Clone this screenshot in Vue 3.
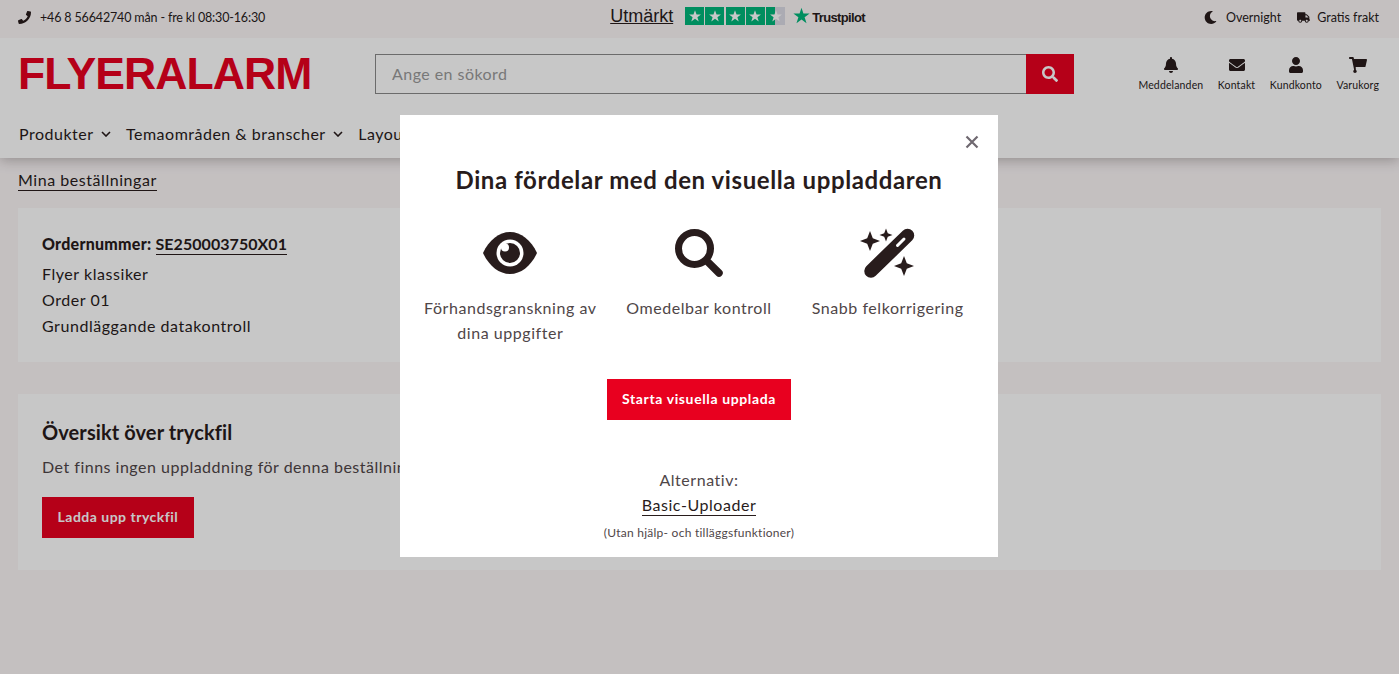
<template>
  <div class="page">
    <div class="topbar">
      <div class="top-item">
        <svg class="ic" viewBox="0 0 512 512"><path d="M493.4 24.6l-104-24c-11.3-2.6-22.9 3.3-27.5 13.9l-48 112c-4.2 9.8-1.4 21.3 6.9 28l60.6 49.6c-36 76.7-98.9 140.5-177.2 177.2l-49.6-60.6c-6.8-8.3-18.2-11.1-28-6.9l-112 48C3.9 366.5-2 378.1.6 389.4l24 104C27.1 504.2 36.7 512 48 512c256.1 0 464-207.5 464-464 0-11.2-7.7-20.9-18.6-23.4z" /></svg>
        <span class="phone">+46 8 56642740 mån - fre kl 08:30-16:30</span>
      </div>
      <div class="trust">
        <a class="trust-label">Utmärkt</a>
        <div class="stars">
          <span v-for="n in 5" :key="n" class="star-box" :class="{ half: n === 5 }">
            <svg viewBox="0 0 24 24"><path d="M12 3.5l2.3 6.2h6.6l-5.3 4 2 6.4-5.6-3.9-5.6 3.9 2-6.4-5.3-4h6.6z" /></svg>
          </span>
        </div>
        <svg class="tp-star" viewBox="0 0 24 24"><path d="M12 1l2.7 8.3h8.8l-7.1 5.2 2.7 8.4-7.1-5.2-7.1 5.2 2.7-8.4L.5 9.3h8.8z" /></svg>
        <span class="tp-name">Trustpilot</span>
      </div>
      <div class="top-right">
        <div class="top-item">
          <svg class="ic" viewBox="0 0 512 512"><path d="M283.211 512c78.962 0 151.079-35.925 198.857-94.792 7.068-8.708-.639-21.43-11.562-19.35-124.203 23.654-238.262-71.576-238.262-196.954 0-72.222 38.662-138.635 101.498-174.394 9.686-5.512 7.25-20.197-3.756-22.23A258.156 258.156 0 0 0 283.211 0c-141.309 0-256 114.511-256 256 0 141.309 114.511 256 256 256z" /></svg>
          <span>Overnight</span>
        </div>
        <div class="top-item truck">
          <svg class="ic" viewBox="0 0 640 512"><path d="M624 352h-16V243.9c0-12.7-5.1-24.9-14.1-33.9L494 110.1c-9-9-21.2-14.1-33.9-14.1H416V48c0-26.5-21.5-48-48-48H48C21.5 0 0 21.5 0 48v320c0 26.5 21.5 48 48 48h16c0 53 43 96 96 96s96-43 96-96h128c0 53 43 96 96 96s96-43 96-96h48c8.8 0 16-7.2 16-16v-32c0-8.8-7.2-16-16-16zM160 464c-26.5 0-48-21.5-48-48s21.5-48 48-48 48 21.5 48 48-21.5 48-48 48zm320 0c-26.5 0-48-21.5-48-48s21.5-48 48-48 48 21.5 48 48-21.5 48-48 48zm80-208H416V144h44.1l99.9 99.9V256z" /></svg>
          <span>Gratis frakt</span>
        </div>
      </div>
    </div>

    <header class="header">
      <div class="header-row">
        <div class="logo-wrap"><span class="logo">FLYERALARM</span></div>
        <form class="search" @submit.prevent>
          <input type="text" placeholder="Ange en sökord" />
          <button type="submit">
            <svg viewBox="0 0 512 512"><path d="M505 442.7L405.3 343c-4.5-4.5-10.6-7-17-7H372c27.6-35.3 44-79.7 44-128C416 93.1 322.9 0 208 0S0 93.1 0 208s93.1 208 208 208c48.3 0 92.7-16.4 128-44v16.3c0 6.4 2.5 12.5 7 17l99.7 99.7c9.4 9.4 24.6 9.4 33.9 0l28.3-28.3c9.4-9.4 9.4-24.6.1-34zM208 336c-70.7 0-128-57.2-128-128 0-70.7 57.2-128 128-128 70.7 0 128 57.2 128 128 0 70.7-57.2 128-128 128z" /></svg>
          </button>
        </form>
        <div class="account">
          <div class="account-item">
            <svg viewBox="0 0 448 512"><path d="M224 512c35.32 0 63.97-28.65 63.97-64H160.03c0 35.35 28.65 64 63.97 64zm215.39-149.71c-19.32-20.76-55.47-51.99-55.47-154.29 0-77.7-54.48-139.9-127.94-155.16V32c0-17.67-14.32-32-31.98-32s-31.98 14.33-31.98 32v20.84C118.56 68.1 64.08 130.3 64.08 208c0 102.3-36.15 133.53-55.47 154.29-6 6.45-8.66 14.16-8.61 21.71.11 16.4 12.98 32 32.1 32h383.8c19.12 0 32-15.6 32.1-32 .05-7.55-2.61-15.27-8.61-21.71z" /></svg>
            <span>Meddelanden</span>
          </div>
          <div class="account-item">
            <svg viewBox="0 0 512 512"><path d="M502.3 190.8c3.9-3.1 9.7-.2 9.7 4.7V400c0 26.5-21.5 48-48 48H48c-26.5 0-48-21.5-48-48V195.6c0-5 5.7-7.8 9.7-4.7 22.4 17.4 52.1 39.5 154.1 113.6 21.1 15.4 56.7 47.8 92.2 47.6 35.7.3 72-32.8 92.3-47.6 102-74.1 131.6-96.3 154-113.7zM256 320c23.2.4 56.6-29.2 73.4-41.4 132.7-96.3 142.8-104.7 173.4-128.7 5.8-4.5 9.2-11.5 9.2-18.9v-19c0-26.5-21.5-48-48-48H48C21.5 64 0 85.5 0 112v19c0 7.4 3.4 14.3 9.2 18.9 30.6 23.9 40.7 32.4 173.4 128.7 16.8 12.2 50.2 41.8 73.4 41.4z" /></svg>
            <span>Kontakt</span>
          </div>
          <div class="account-item">
            <svg viewBox="0 0 448 512"><path d="M224 256c70.7 0 128-57.3 128-128S294.7 0 224 0 96 57.3 96 128s57.3 128 128 128zm89.6 32h-16.7c-22.2 10.2-46.9 16-72.9 16s-50.6-5.8-72.9-16h-16.7C60.2 288 0 348.2 0 422.4V464c0 26.5 21.5 48 48 48h352c26.5 0 48-21.5 48-48v-41.6c0-74.2-60.2-134.4-134.4-134.4z" /></svg>
            <span>Kundkonto</span>
          </div>
          <div class="account-item">
            <svg viewBox="0 0 576 512"><path d="M528.12 301.319l47.273-208C578.806 78.301 567.391 64 551.99 64H159.208l-9.166-44.81C147.758 8.021 137.93 0 126.529 0H24C10.745 0 0 10.745 0 24v16c0 13.255 10.745 24 24 24h69.883l70.248 343.435C147.325 417.1 136 435.222 136 456c0 30.928 25.072 56 56 56s56-25.072 56-56c0-22.172-12.888-41.332-31.579-50.405l5.517-24.276c3.413-15.018-8.002-29.319-23.403-29.319H218.117l-6.545-32h293.145c11.206 0 20.92-7.754 23.403-18.681z" /></svg>
            <span>Varukorg</span>
          </div>
        </div>
      </div>
      <nav class="nav">
        <a v-for="item in navItems" :key="item" class="nav-link">
          {{ item }}
          <svg viewBox="0 0 10 6"><path d="M1 1l4 4 4-4" /></svg>
        </a>
      </nav>
    </header>

    <main class="content">
      <a class="back-link">Mina beställningar</a>
      <section class="card order">
        <p class="order-no"><b>Ordernummer:</b> <a>SE250003750X01</a></p>
        <p>Flyer klassiker</p>
        <p>Order 01</p>
        <p>Grundläggande datakontroll</p>
      </section>
      <section class="card upload">
        <h2>Översikt över tryckfil</h2>
        <p>Det finns ingen uppladdning för denna beställning.</p>
        <button class="btn dark">Ladda upp tryckfil</button>
      </section>
    </main>

    <div class="overlay">
      <div class="modal">
        <button class="close" aria-label="Stäng">
          <svg viewBox="0 0 14 14"><path d="M1.5 1.5l11 11M12.5 1.5l-11 11" /></svg>
        </button>
        <h1>Dina fördelar med den visuella uppladdaren</h1>
        <div class="benefits">
          <div class="benefit">
            <svg viewBox="0 0 60 60">
              <path d="M3 29C9 16 19 8 30 8s21 8 27 21C51 42 41 50 30 50S9 42 3 29z" />
              <circle cx="30" cy="29" r="13.5" fill="#fff" />
              <circle cx="30" cy="29" r="10" />
              <circle cx="25" cy="23.5" r="4" fill="#fff" />
            </svg>
            <p>Förhandsgranskning av dina uppgifter</p>
          </div>
          <div class="benefit">
            <svg viewBox="0 0 60 60">
              <circle cx="25.5" cy="24.5" r="16" fill="none" stroke="#281c1c" stroke-width="7" />
              <path d="M39.3 38.3L50 49" fill="none" stroke="#281c1c" stroke-width="7.5" stroke-linecap="round" />
            </svg>
            <p>Omedelbar kontroll</p>
          </div>
          <div class="benefit">
            <svg viewBox="0 0 60 60">
              <path d="M49.5 11.5L13 47" fill="none" stroke="#281c1c" stroke-width="13.5" stroke-linecap="round" />
              <path d="M39.5 21.5L46 15" fill="none" stroke="#fff" stroke-width="3" stroke-linecap="round" />
              <path d="M12 7l2.8 7.2L22 17l-7.2 2.8L12 27l-2.8-7.2L2 17l7.2-2.8z" />
              <path d="M28 4.5l1.8 4.7L34.5 11l-4.7 1.8L28 17.5l-1.8-4.7L21.5 11l4.7-1.8z" />
              <path d="M46 32l2.8 7.2L56 42l-7.2 2.8L46 52l-2.8-7.2L36 42l7.2-2.8z" />
            </svg>
            <p>Snabb felkorrigering</p>
          </div>
        </div>
        <button class="btn bright">Starta visuella upplada</button>
        <p class="alt">Alternativ:</p>
        <a class="alt-link">Basic-Uploader</a>
        <p class="alt-note">(Utan hjälp- och tilläggsfunktioner)</p>
      </div>
    </div>
  </div>
</template>

<script setup>
const navItems = ["Produkter", "Temaområden & branscher", "Layoutmallar"];
</script>

<style>
html,
body {
  margin: 0;
  background: #fbf6f7;
  overflow: hidden;
}
</style>

<style scoped>
.page {
  height: 674px;
  font-family: Lato, "Noto Sans", sans-serif;
  font-size: 16px;
  letter-spacing: 0.55px;
  color: #281c1c;
  background: #fbf6f7;
}
p {
  margin: 0;
}
.topbar {
  position: relative;
  z-index: 1;
  height: 38px;
  box-sizing: border-box;
  padding: 0 20px 3px 18px;
  display: flex;
  justify-content: space-between;
  align-items: center;
  font-size: 12.5px;
  letter-spacing: 0;
  background: #fbf6f7;
}
.top-item {
  display: flex;
  align-items: center;
  gap: 9px;
}
.top-item.truck {
  gap: 7px;
}
.top-item .ic {
  width: 13px;
  height: 13px;
  fill: #281c1c;
}
.phone {
  letter-spacing: -0.15px;
}
.top-right {
  display: flex;
  gap: 16px;
}
.trust {
  align-self: flex-start;
  padding: 7px 0 0 6px;
  display: flex;
  align-items: center;
}
.trust-label {
  font-family: "Liberation Sans", Arial, sans-serif;
  font-size: 18px;
  line-height: 18px;
  text-decoration: underline;
  margin-right: 12px;
}
.stars {
  display: flex;
  gap: 1.5px;
  margin-right: 8px;
}
.star-box {
  width: 18.8px;
  height: 18px;
  background: #00b67a;
  display: flex;
  align-items: center;
  justify-content: center;
}
.star-box.half {
  background: linear-gradient(90deg, #00b67a 50%, #dcdce6 50%);
}
.star-box svg {
  width: 16px;
  height: 16px;
  fill: #fff;
}
.tp-star {
  width: 17px;
  height: 17px;
  fill: #00b67a;
  margin: -2px 2px 0 0;
}
.tp-name {
  font-family: "Liberation Sans", Arial, sans-serif;
  font-size: 13px;
  font-weight: 700;
  letter-spacing: -0.65px;
  margin-top: 3px;
}
.header {
  position: relative;
  height: 120px;
  padding: 16px 20px 0 18px;
  box-sizing: border-box;
  background: #fff;
  box-shadow: 0 2px 12px rgba(40, 28, 28, 0.3);
}
.header-row {
  display: flex;
  height: 40px;
}
.logo-wrap {
  width: 357px;
  display: flex;
  align-items: center;
}
.logo {
  font-family: "Liberation Sans", Arial, sans-serif;
  font-weight: 700;
  font-size: 44.5px;
  line-height: 40px;
  letter-spacing: -0.9px;
  color: #e8001f;
}
.search {
  width: 699px;
  display: flex;
}
.search input {
  flex: 1;
  min-width: 0;
  box-sizing: border-box;
  height: 40px;
  padding: 0 16px 2px;
  border: 1px solid #8a8a8a;
  border-right: 0;
  background: #fff;
  font: inherit;
  letter-spacing: 0.45px;
  outline: none;
}
.search input::placeholder {
  color: #9a9a9a;
  opacity: 1;
}
.search button {
  width: 48px;
  border: 0;
  padding: 0;
  background: #e8001f;
  display: flex;
  align-items: center;
  justify-content: center;
}
.search button svg {
  width: 16px;
  height: 16px;
  fill: #fff;
}
.account {
  margin-left: auto;
  display: flex;
  gap: 14.5px;
  font-size: 10.5px;
  letter-spacing: 0.15px;
}
.account-item {
  display: flex;
  flex-direction: column;
  align-items: center;
  gap: 6px;
  padding-top: 3px;
}
.account-item svg {
  height: 16px;
  fill: #281c1c;
}
.nav {
  display: flex;
  gap: 14.5px;
  margin-top: 29px;
  line-height: 22px;
  letter-spacing: 0.5px;
}
.nav-link {
  display: flex;
  align-items: center;
  gap: 7px;
  margin-left: 1px;
}
.nav-link svg {
  width: 10px;
  height: 6px;
  fill: none;
  stroke: #281c1c;
  stroke-width: 1.6;
}
.content {
  padding: 12px 18px 0;
}
.back-link {
  display: inline-block;
  line-height: 20px;
  border-bottom: 1px solid #281c1c;
}
.card {
  background: #fff;
  padding: 23px 24px 24px;
}
.order {
  margin-top: 17px;
  height: 154px;
  box-sizing: border-box;
  line-height: 26px;
}
.order-no {
  font-weight: 700;
  letter-spacing: 0.25px;
  margin-bottom: 4px;
}
.order-no a {
  border-bottom: 1px solid #281c1c;
  padding-bottom: 1px;
  letter-spacing: 0.05px;
}
.upload {
  margin-top: 32px;
  height: 176px;
  box-sizing: border-box;
  padding-top: 24px;
}
.upload h2 {
  margin: 0;
  font-size: 20px;
  line-height: 28px;
  font-weight: 700;
  letter-spacing: 0.1px;
}
.upload p {
  margin: 8px 0 17px;
  line-height: 26px;
  letter-spacing: 0.5px;
  color: #4f4648;
}
.btn {
  display: block;
  height: 41px;
  padding: 0 15.5px 2px;
  border: 0;
  background: #e8001f;
  color: #fff;
  font: inherit;
  font-size: 14px;
  font-weight: 700;
  letter-spacing: 0.5px;
}
.overlay {
  position: fixed;
  z-index: 2;
  inset: 0;
  background: rgba(0, 0, 0, 0.22);
  display: flex;
  justify-content: center;
  align-items: flex-start;
  padding: 115px 1px 0 0;
}
.modal {
  position: relative;
  width: 598px;
  height: 442px;
  box-sizing: border-box;
  padding: 48px 16px 0;
  background: #fff;
  text-align: center;
}
.close {
  position: absolute;
  top: 20px;
  right: 19px;
  width: 14px;
  height: 14px;
  padding: 0;
  border: 0;
  background: none;
}
.close svg {
  display: block;
  fill: none;
  stroke: #6f6870;
  stroke-width: 2.2;
}
.modal h1 {
  margin: 0;
  font-size: 24px;
  line-height: 34px;
  font-weight: 700;
  letter-spacing: 0.6px;
}
.benefits {
  display: grid;
  grid-template-columns: repeat(3, 1fr);
  margin-top: 27px;
  height: 155px;
}
.benefit svg {
  display: block;
  width: 60px;
  height: 60px;
  margin: 0 auto 11px;
  fill: #281c1c;
}
.benefit p {
  line-height: 25px;
  color: #4f4648;
}
.bright {
  margin: 0 auto;
  width: 184px;
  padding: 0 0 2px;
  letter-spacing: 0.62px;
}
.alt {
  margin-top: 47px;
  line-height: 25px;
  color: #4f4648;
}
.alt-link {
  display: inline-block;
  line-height: 20px;
  margin-top: 3px;
  border-bottom: 1px solid #281c1c;
}
.alt-note {
  margin-top: 8px;
  font-size: 12px;
  line-height: 18px;
  letter-spacing: 0.25px;
  color: #4f4648;
}
</style>
